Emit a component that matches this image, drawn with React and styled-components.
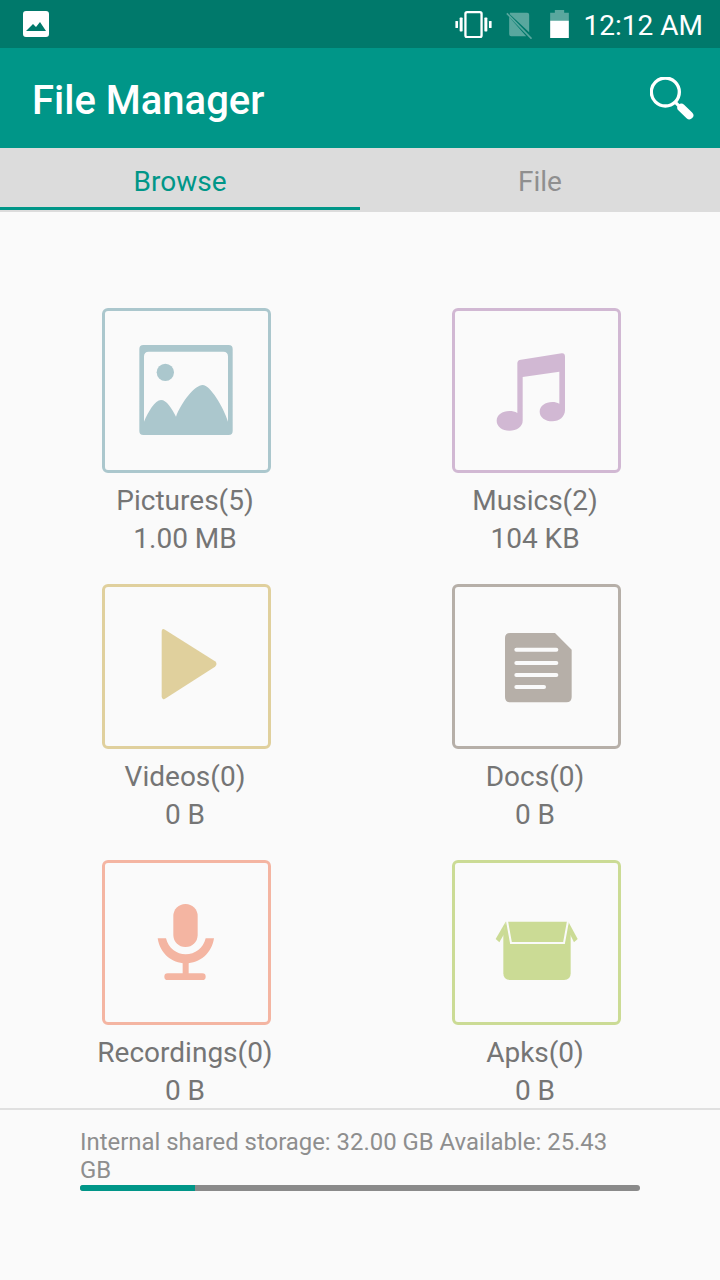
import React from 'react';
import styled, { createGlobalStyle } from 'styled-components';

const Global = createGlobalStyle`
	html, body {
		margin: 0;
		padding: 0;
		background: #fafafa;
	}
	* {
		box-sizing: border-box;
	}
`;

const PictureIcon = () => (
	<svg viewBox='45 33 492 477' width='164' height='159'>
		<path
			fill='#abc7cd'
			fillRule='evenodd'
			d='M160 135H416Q428 135 428 147V393Q428 405 416 405H160Q148 405 148 393V147Q148 135 160 135ZM176 155Q162 155 162 169V365C175 335 195 300 213 300C230 300 245 325 258 350C275 305 315 255 338 255C360 255 400 320 414 365V169Q414 155 400 155Z'
		/>
		<circle cx='226' cy='217' r='26' fill='#abc7cd' />
	</svg>
);

const MusicIcon = () => (
	<svg viewBox='45 33 492 477' width='164' height='159'>
		<path
			fill='#d1b8d3'
			d='M232 190Q232 180 243 179L365 160Q375 159 375 170V330C375 350 358 364 337 364C316 364 299 352 299 335C299 318 316 306 337 306C345 306 352 308 358 311V215L248 231V362C248 380 230 392 208 392C187 392 170 380 170 362C170 345 187 333 208 333C217 333 225 335 232 339Z'
		/>
	</svg>
);

const PlayIcon = () => (
	<svg viewBox='45 22 492 477' width='164' height='159'>
		<path
			fill='#e0d09d'
			d='M225 150L375 245Q384 253 375 261L225 357Q215 363 215 350V158Q215 144 225 150Z'
		/>
	</svg>
);

const DocIcon = () => (
	<svg viewBox='45 22 492 477' width='164' height='159'>
		<path
			fill='#b6afa8'
			d='M210 160H345L395 210V352Q395 368 379 368H210Q195 368 195 352V175Q195 160 210 160Z'
		/>
		<g stroke='#fafafa' strokeWidth='12' strokeLinecap='round'>
			<path d='M229 210H349' />
			<path d='M229 250H349' />
			<path d='M229 286H349' />
			<path d='M229 322H312' />
		</g>
	</svg>
);

const MicIcon = () => (
	<svg viewBox='45 24 492 477' width='164' height='159'>
		<g fill='#f4b5a2'>
			<rect x='250' y='147' width='73' height='129' rx='36' />
			<path d='M203 250H228C235 280 260 298 287 298C315 298 340 280 347 250H372C365 295 330 325 287 325C245 325 210 295 203 250Z' />
			<rect x='278' y='322' width='18' height='36' />
			<rect x='223' y='355' width='124' height='20' rx='10' />
		</g>
	</svg>
);

const BoxIcon = () => (
	<svg viewBox='45 24 492 477' width='164' height='159'>
		<g fill='#cbdb95'>
			<path d='M197 200H385L392 238V355Q392 375 372 375H210Q190 375 190 355V238Z' />
			<path d='M197 200L167 252L178 262L192 238Z' />
			<path d='M385 200L413 252L402 262L390 238Z' />
		</g>
		<path
			d='M201 198L213 264H372L384 198'
			fill='none'
			stroke='#fafafa'
			strokeWidth='6'
		/>
	</svg>
);

const categories = [
	{ name: 'Pictures(5)', size: '1.00 MB', color: '#abc7cd', Icon: PictureIcon },
	{ name: 'Musics(2)', size: '104 KB', color: '#d1b8d3', Icon: MusicIcon },
	{ name: 'Videos(0)', size: '0 B', color: '#e0d09d', Icon: PlayIcon },
	{ name: 'Docs(0)', size: '0 B', color: '#b6afa8', Icon: DocIcon },
	{ name: 'Recordings(0)', size: '0 B', color: '#f4b5a2', Icon: MicIcon },
	{ name: 'Apks(0)', size: '0 B', color: '#cbdb95', Icon: BoxIcon },
];

const totalGb = 32;
const availableGb = 25.43;

const App = () => {
	return (
		<Screen>
			<Global />
			<StatusBar>
				<svg width='26' height='26' viewBox='0 0 26 26'>
					<path
						fill='#fff'
						fillRule='evenodd'
						d='M3 0H23Q26 0 26 3V23Q26 26 23 26H3Q0 26 0 23V3Q0 0 3 0ZM3 20H23L17 11L13 16L10 13Z'
					/>
				</svg>
				<StatusRight>
					<VibrateIcon width='37' height='27' viewBox='42 30 110 82'>
						<g fill='#fff'>
							<rect x='42' y='60' width='8' height='22' rx='2' />
							<rect x='55' y='50' width='9' height='42' rx='2' />
							<rect x='130' y='50' width='9' height='42' rx='2' />
							<rect x='144' y='60' width='8' height='22' rx='2' />
						</g>
						<rect
							x='72.5'
							y='33.5'
							width='49'
							height='76'
							rx='5'
							fill='none'
							stroke='#fff'
							strokeWidth='7'
						/>
					</VibrateIcon>
					<SimIcon width='26' height='27' viewBox='195 35 77 81'>
						<path
							fill='#fff'
							fillOpacity='0.35'
							d='M206 37H258Q264 37 264 43V96L206 42ZM204 50L255 108H210Q204 108 204 102Z'
						/>
						<path
							d='M197 39L271 115'
							stroke='#fff'
							strokeOpacity='0.35'
							strokeWidth='5'
						/>
					</SimIcon>
					<BatteryIcon width='19' height='28' viewBox='328 28 56 84'>
						<path
							fill='#fff'
							fillOpacity='0.35'
							d='M342 28H370V36H384V60H328V36H342Z'
						/>
						<path fill='#fff' d='M328 60H384V112H328Z' />
					</BatteryIcon>
					<Clock>12:12 AM</Clock>
				</StatusRight>
			</StatusBar>
			<AppBar>
				<Title>File Manager</Title>
				<svg width='44' height='43' viewBox='632 230 132 129'>
					<circle
						cx='678'
						cy='275'
						r='42'
						fill='none'
						stroke='#fff'
						strokeWidth='10'
					/>
					<path d='M706 304L724 322' stroke='#fff' strokeWidth='10' />
					<path
						d='M726 322L750 345'
						stroke='#fff'
						strokeWidth='24'
						strokeLinecap='round'
					/>
				</svg>
			</AppBar>
			<Tabs>
				<Tab $active>Browse</Tab>
				<Tab>File</Tab>
			</Tabs>
			<Grid>
				{categories.map((el) => (
					<Card key={el.name}>
						<IconBox $color={el.color}>
							<el.Icon />
						</IconBox>
						<Label>{el.name}</Label>
						<Label>{el.size}</Label>
					</Card>
				))}
			</Grid>
			<Footer>
				<StorageText>
					Internal shared storage: 32.00 GB Available: 25.43 GB
				</StorageText>
				<Track>
					<Fill
						style={{
							width: `${((totalGb - availableGb) / totalGb) * 100}%`,
						}}
					/>
				</Track>
			</Footer>
		</Screen>
	);
};

const Screen = styled.div`
	display: flex;
	flex-direction: column;
	width: 720px;
	height: 1280px;
	overflow: hidden;
	background: #fafafa;
	font-family: Roboto, 'Liberation Sans', sans-serif;
`;

const StatusBar = styled.div`
	display: flex;
	flex: none;
	align-items: center;
	justify-content: space-between;
	height: 48px;
	padding: 0 17px 0 23px;
	background: #00796b;
`;

const StatusRight = styled.div`
	display: flex;
	align-items: center;
`;

const VibrateIcon = styled.svg`
	margin-right: 14px;
`;

const SimIcon = styled.svg`
	margin: 3px 18px 0 0;
`;

const BatteryIcon = styled.svg`
	margin: -1px 15px 0 0;
`;

const Clock = styled.div`
	margin-top: 3px;
	color: #fff;
	font-size: 28px;
	line-height: 48px;
	white-space: nowrap;
`;

const AppBar = styled.div`
	display: flex;
	flex: none;
	align-items: center;
	justify-content: space-between;
	height: 100px;
	padding: 0 26px 0 32px;
	background: #009688;
`;

const Title = styled.div`
	padding-top: 5px;
	color: #fff;
	font-size: 40px;
	font-weight: 500;
`;

const Tabs = styled.div`
	display: flex;
	flex: none;
	height: 64px;
	padding-bottom: 2px;
	background: #dcdcdc;
`;

const Tab = styled.div`
	display: flex;
	flex: 1;
	align-items: center;
	justify-content: center;
	padding-top: 7px;
	border-bottom: 3px solid ${(p) => (p.$active ? '#009688' : 'transparent')};
	color: ${(p) => (p.$active ? '#009688' : '#8f8f8f')};
	font-size: 28px;
`;

const Grid = styled.div`
	display: grid;
	flex: 1;
	grid-template-columns: 350px 350px;
	grid-auto-rows: 276px;
	min-height: 0;
	padding: 96px 0 0 12px;
	overflow: hidden;
`;

const Card = styled.div`
	display: flex;
	flex-direction: column;
	align-items: center;
	height: 276px;
	padding-right: 1px;
`;

const IconBox = styled.div`
	flex: none;
	width: 169px;
	height: 165px;
	margin-bottom: 9px;
	border: 3px solid ${(p) => p.$color};
	border-radius: 6px;
	svg {
		display: block;
	}
`;

const Label = styled.div`
	margin-right: 3px;
	color: #757575;
	font-size: 28px;
	line-height: 38px;
	white-space: nowrap;
`;

const Footer = styled.div`
	flex: none;
	height: 172px;
	padding: 18px 80px 0;
	border-top: 2px solid #e0e0e0;
`;

const StorageText = styled.div`
	color: #8e8e8e;
	font-size: 23.9px;
	line-height: 28px;
`;

const Track = styled.div`
	height: 6px;
	margin-top: 1px;
	overflow: hidden;
	border-radius: 3px;
	background: #8a8a8a;
`;

const Fill = styled.div`
	height: 100%;
	background: #009688;
`;

export default App;
